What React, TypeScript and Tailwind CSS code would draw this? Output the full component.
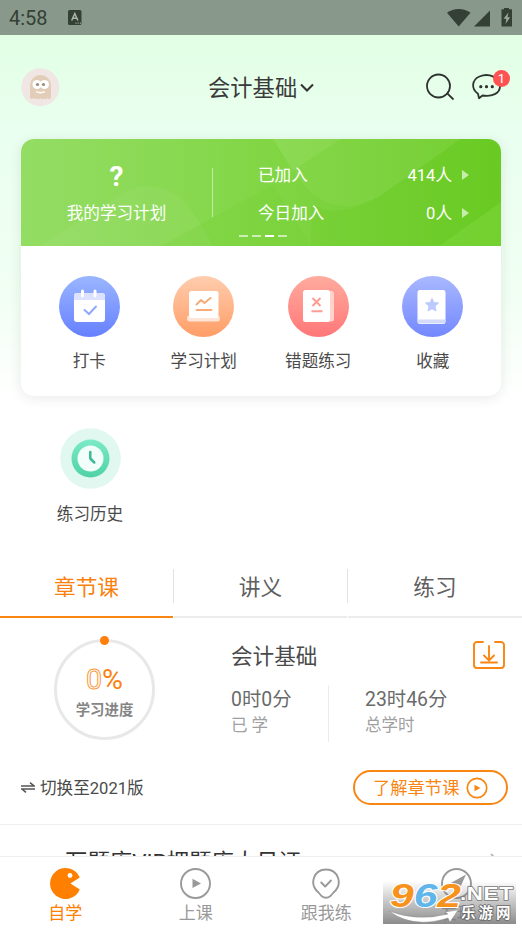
const StatusBar = () => {
  return (
    <div className="h-[35px] shrink-0 bg-[#88988a] flex items-center text-[#344036]">
      <span className="ml-[9px] w-[40px] text-[20px] leading-[35px] pt-[2px]">4:58</span>
      <svg className="ml-[19px]" width="14" height="16" viewBox="0 0 14 16">
        <rect width="13.5" height="15" rx="1.5" fill="#344036" />
        <path d="M3.7 10.5 6.8 3.5 9.9 10.5M4.9 8.3h3.8" fill="none" stroke="#a7b6a8" strokeWidth="1.5" />
        <path d="M7.5 13.2h1M9.7 13.2h1M11.9 13.2h1" stroke="#a7b6a8" strokeWidth="1.2" />
      </svg>
      <svg className="ml-auto mr-[9px]" width="67" height="20" viewBox="446 7.5 67 20">
        <path d="M447 12.3C453 7.2 464.500 7.200 470.500 12.300L458.700 26Z" fill="#344036" />
        <path d="M474 26 490 10V26Z" fill="#344036" />
        <path d="M501.500 8.800h2.500V7.500h5v1.300h3V26h-10.500Z" fill="#344036" />
        <path d="M508.500 12 503.500 18.300h2.900L505.500 23.500l4.600-6.700h-2.700Z" fill="#9dac9e" />
      </svg>
    </div>
  )
}

const Header = () => {
  return (
    <div className="h-[104px] shrink-0 grid grid-cols-[187px_1fr_97px] items-center pl-[21px]">
      <svg width="39" height="39" viewBox="0 0 39 39">
        <circle cx="19.300" cy="19.300" r="19" fill="#f0e6e3" />
        <path d="M9 30V17a10.500 10 0 0 1 21 0V30q-1.700 2-3.300 0-2 2.200-3.600.5-2 1.500-3.600 0-2 1.500-3.600 0-2 1.500-3.600-.5Q10.500 32 9 30Z" fill="#e2cdb9" />
        <circle cx="16" cy="16.500" r="4.500" fill="#fff" />
        <circle cx="23.500" cy="16.500" r="4.500" fill="#fff" />
        <circle cx="16.500" cy="16.500" r="1.600" fill="#998c80" />
        <circle cx="22.500" cy="16.500" r="1.600" fill="#998c80" />
        <path d="M15 23.700q4.500 3 9 0-4.500 1.200-9 0Z" fill="#fff" stroke="#fff" strokeWidth=".7" />
      </svg>
      <div className="flex items-center text-[22.300px] leading-none text-[#3a3a3a] pt-[2px]">
        <span className="pt-px">会计基础</span>
        <svg className="ml-[3px]" width="14" height="10" viewBox="0 0 14 10" fill="none" stroke="#333" strokeWidth="2.100">
          <path d="M1 1.500 7 7.500 13 1.500" />
        </svg>
      </div>
      <div className="flex items-center">
        <svg width="30" height="30" viewBox="425 72 30 30" fill="none" stroke="#2e332f" strokeWidth="1.800" strokeLinecap="round">
          <circle cx="438.500" cy="86" r="11.500" />
          <path d="m447.500 93.700 5.500 5.300" />
        </svg>
        <div className="relative ml-[15px]">
          <svg width="32" height="30" viewBox="470 72 32 30" fill="none">
            <path d="M478 93.800C471 89 471.500 80 479.500 76.500 489 72.500 500 77.500 500 86.200 500 93.500 492 97 482.500 95.500L479 98.300Z" stroke="#2e332f" strokeWidth="1.800" strokeLinejoin="round" />
            <circle cx="480.800" cy="86.700" r="1.600" fill="#2e332f" />
            <circle cx="486.500" cy="86.700" r="1.600" fill="#2e332f" />
            <circle cx="492.300" cy="86.700" r="1.600" fill="#2e332f" />
          </svg>
          <span className="absolute -top-[2px] left-[23px] size-[17px] rounded-full bg-[#ff5353] text-center text-[13px] leading-[18px] text-white">1</span>
        </div>
      </div>
    </div>
  )
}

const PlanRow = ({ label, count }: { label: string; count: string }) => {
  return (
    <div className="h-[38px] flex items-center">
      <span className="pt-[3px]">{label}</span>
      <span className="ml-auto pt-[3px]">{count}</span>
      <svg className="ml-[10px]" width="7" height="10" viewBox="0 0 7 10">
        <path d="M0 0 7 5 0 10Z" fill="#c6edaa" />
      </svg>
    </div>
  )
}

const PlanBanner = () => {
  return (
    <div className="relative h-[107px] bg-linear-to-r from-[#94dd64] via-[#82d645] to-[#6bcb25] text-white text-[16.600px] leading-none">
      <svg className="absolute inset-0" width="480" height="107" viewBox="0 0 480 107">
        <path d="M20 107 100 55Q130 38 158 58 174 72 192 107Z" fill="#fff" opacity=".05" />
        <path d="M140 107 252 46 290 107Z" fill="#6acb25" opacity=".18" />
        <path d="M440 0 362 55Q320 82 290 65V107H480V0Z" fill="#62c71b" opacity=".2" />
        <path d="M252 0 282 45Q315 84 362 55L440 0Z" fill="#a1e26b" opacity=".16" />
        <path d="M252 0h68L271 32Z" fill="#b7eb91" opacity=".15" />
        <path d="M418 107 480 63V107Z" fill="#8be14b" opacity=".3" />
      </svg>
      <div className="relative flex h-full">
        <div className="w-[191px] flex flex-col items-center">
          <span className="mt-[25px] text-[28px] leading-[26px] font-bold">?</span>
          <span className="mt-[16px]">我的学习计划</span>
        </div>
        <div className="mt-[29px] h-[49px] w-px bg-white/50" />
        <div className="ml-[45px] mr-[32px] mt-[17px] flex-1">
          <PlanRow label="已加入" count="414人" />
          <PlanRow label="今日加入" count="0人" />
        </div>
      </div>
      <div className="absolute left-[218px] bottom-[9px] flex gap-[4px]">
        <i className="h-[2px] w-[9px] bg-white/60" />
        <i className="h-[2px] w-[9px] bg-white/60" />
        <i className="h-[2px] w-[9px] bg-white" />
        <i className="h-[2px] w-[9px] bg-white/60" />
      </div>
    </div>
  )
}

const CheckInIcon = () => {
  return (
    <svg width="61" height="61" viewBox="0 0 61 61">
      <defs>
        <linearGradient id="blue" x2="0" y2="1">
          <stop stopColor="#9ab6ff" />
          <stop offset="1" stopColor="#6680ff" />
        </linearGradient>
      </defs>
      <circle cx="30.500" cy="30.500" r="30.500" fill="url(#blue)" />
      <rect x="15" y="17" width="31" height="29" rx="3" fill="#fff" />
      <path d="M15 24v-4a3 3 0 0 1 3-3h25a3 3 0 0 1 3 3v4Z" fill="#dbe1ff" />
      <path d="M23.500 15v5M36 15v5" stroke="#fff" strokeWidth="3" strokeLinecap="round" />
      <path d="m25.500 34 4.500 4 7-7.500" fill="none" stroke="#91a9fc" strokeWidth="2" strokeLinecap="round" />
    </svg>
  )
}

const StudyPlanIcon = () => {
  return (
    <svg width="61" height="61" viewBox="0 0 61 61">
      <defs>
        <linearGradient id="orange" x2="0" y2="1">
          <stop stopColor="#ffcdae" />
          <stop offset="1" stopColor="#ff9d66" />
        </linearGradient>
      </defs>
      <circle cx="30.500" cy="30.500" r="30.500" fill="url(#orange)" />
      <rect x="14" y="39.500" width="33" height="6" rx="3" fill="#ffe5d8" />
      <rect x="16" y="15" width="29.500" height="27" rx="2.500" fill="#fff" />
      <path d="m23.500 28.500 4.500-4.500 3.500 3 6-5" fill="none" stroke="#f8ad79" strokeWidth="2" strokeLinecap="round" strokeLinejoin="round" />
      <path d="M23.500 34h15" stroke="#f8ad79" strokeWidth="2" strokeLinecap="round" />
    </svg>
  )
}

const WrongIcon = () => {
  return (
    <svg width="61" height="61" viewBox="0 0 61 61">
      <defs>
        <linearGradient id="red" x2="0" y2="1">
          <stop stopColor="#ffab9e" />
          <stop offset="1" stopColor="#ff7778" />
        </linearGradient>
      </defs>
      <circle cx="30.500" cy="30.500" r="30.500" fill="url(#red)" />
      <rect x="18" y="15" width="28" height="30.500" rx="2.500" fill="#ffd2cc" />
      <rect x="15" y="14" width="27" height="32" rx="2.500" fill="#fff" />
      <path d="m24.500 22 8 8m0-8-8 8" stroke="#ff9c92" strokeWidth="2" />
      <path d="M23.500 35.200h11" stroke="#ff9c92" strokeWidth="2" />
    </svg>
  )
}

const FavoriteIcon = () => {
  return (
    <svg width="61" height="61" viewBox="0 0 61 61">
      <defs>
        <linearGradient id="violet" x2="0" y2="1">
          <stop stopColor="#a9b8ff" />
          <stop offset="1" stopColor="#7388ff" />
        </linearGradient>
      </defs>
      <circle cx="30.500" cy="30.500" r="30.500" fill="url(#violet)" />
      <rect x="15.500" y="14" width="28" height="34" rx="2.500" fill="#fff" />
      <path d="M15.500 43.500h28v2a2 2 0 0 1-2 2h-24a2 2 0 0 1-2-2Z" fill="#d3dafa" />
      <path d="m30 22.500 1.800 4 4.700.5-3.500 3.200 1 4.800-4-2.300-4 2.300 1-4.800-3.500-3.200 4.700-.5Z" fill="#bdcaff" stroke="#bdcaff" />
    </svg>
  )
}

const HistoryIcon = () => {
  return (
    <svg width="61" height="61" viewBox="0 0 61 61">
      <defs>
        <linearGradient id="mint" x2="0" y2="1">
          <stop stopColor="#7ceac7" />
          <stop offset="1" stopColor="#4fd2a5" />
        </linearGradient>
      </defs>
      <circle cx="30.500" cy="30.500" r="30.300" fill="#e0f8ef" />
      <circle cx="30.500" cy="30.500" r="19" fill="url(#mint)" />
      <circle cx="30.500" cy="30.500" r="13" fill="#f1fefa" />
      <path d="M30.300 24v6.500l4 4" fill="none" stroke="#3fb995" strokeWidth="2.500" strokeLinecap="round" strokeLinejoin="round" />
    </svg>
  )
}

const shortcuts = [
  { label: "打卡", Icon: CheckInIcon },
  { label: "学习计划", Icon: StudyPlanIcon },
  { label: "错题练习", Icon: WrongIcon },
  { label: "收藏", Icon: FavoriteIcon },
]

const MainCard = () => {
  return (
    <div className="mx-[21px] h-[257px] shrink-0 rounded-[13px] bg-white overflow-hidden shadow-[0_2px_14px_rgba(0,0,0,0.09)]">
      <PlanBanner />
      <div className="grid grid-cols-4 pl-[11px] pr-[11px] pt-[30px]">
        {shortcuts.map(({ label, Icon }) => (
          <div key={label} className="flex flex-col items-center">
            <Icon />
            <span className="mt-[16px] text-[16.600px] leading-[18px] text-[#4a4a4a]">{label}</span>
          </div>
        ))}
      </div>
    </div>
  )
}

const Tabs = () => {
  return (
    <div className="h-[64px] shrink-0 flex text-[21.700px] text-[#606060] leading-[67px] text-center">
      <div className="w-[173px] border-b-2 border-[#f98613] text-[#fa810e]">章节课</div>
      <div className="w-px h-[34px] mt-[15px] bg-[#e2e2e2]" />
      <div className="w-[173px] border-b-2 border-[#ececec]">讲义</div>
      <div className="w-px h-[34px] mt-[15px] bg-[#e2e2e2]" />
      <div className="flex-1 border-b-2 border-[#ececec]">练习</div>
    </div>
  )
}

const Progress = () => {
  return (
    <div className="relative mt-[21px] ml-[54px] size-[101px] rounded-full border-[3px] border-[#e8e8e8] flex flex-col items-center">
      <i className="absolute -top-[6px] left-[43px] size-[9px] rounded-full bg-[#ff7f0a]" />
      <div className="mt-[24px] text-[28.500px] leading-[28px] text-[#fa810e] flex">
        <span className="text-white [-webkit-text-stroke:1px_#f6993e]">0</span>
        <span>%</span>
      </div>
      <span className="mt-[10px] text-[14.400px] leading-none font-bold text-[#858585]">学习进度</span>
    </div>
  )
}

const Course = () => {
  return (
    <div className="h-[207px] shrink-0 border-b border-[#f0f0f0]">
      <div className="flex h-[130px]">
        <div className="w-[231px]"><Progress /></div>
        <div className="flex-1">
          <div className="flex h-[67px] pt-[22px] pr-[17px]">
            <span className="text-[21.600px] leading-[34px] text-[#4a4a4a]">会计基础</span>
            <svg className="ml-auto" width="32" height="30" viewBox="0 0 32 30" fill="none" stroke="#f98613" strokeWidth="1.900" strokeLinecap="round">
              <path d="M10 2H4a3 3 0 0 0-3 3v20a3 3 0 0 0 3 3h24a3 3 0 0 0 3-3V5a3 3 0 0 0-3-3h-6M16 6v14M11 15.500l5 5 5-5M8 22.500h16" />
            </svg>
          </div>
          <div className="flex text-[19.400px] leading-[30px] text-[#6a6a6a]">
            <div className="w-[98px] h-[57px] border-r border-[#ececec]">
              <p>0时0分</p>
              <p className="text-[16.500px] leading-[21px] text-[#a0a0a0]">已 学</p>
            </div>
            <div className="ml-[36px]">
              <p>23时46分</p>
              <p className="text-[16.500px] leading-[21px] text-[#a0a0a0]">总学时</p>
            </div>
          </div>
        </div>
      </div>
      <div className="mt-[22px] ml-[21px] mr-[14px] flex items-center">
        <svg width="14" height="11" viewBox="0 0 14 11" fill="none" stroke="#555" strokeWidth="1.500">
          <path d="M0 4h13L9 .7M14 7H1l4 3.300" />
        </svg>
        <span className="ml-[5px] pt-[4px] text-[16.600px] leading-none text-[#4a4a4a]">切换至2021版</span>
        <button className="ml-auto flex h-[35px] w-[155px] items-center rounded-full border-2 border-[#f98613] pl-[18px] text-[17.300px] leading-none text-[#f98613]">
          <span className="pt-[3px]">了解章节课</span>
          <svg className="ml-[7px]" width="22" height="22" viewBox="0 0 22 22">
            <circle cx="11" cy="11" r="9.700" fill="none" stroke="#f98613" strokeWidth="1.700" />
            <path d="M8.500 7.800 14.500 11 8.500 14.200Z" fill="#f98613" />
          </svg>
        </button>
      </div>
    </div>
  )
}

const Watermark = () => {
  return (
    <div className="absolute left-[383px] top-[24px] h-[43px] w-[133px] bg-linear-to-b from-[#777]/0 to-[#777]/85 text-white leading-none">
      <svg className="absolute left-[6px] top-[28px]" width="70" height="16" viewBox="0 0 70 16">
        <path d="M0 2Q28 13 59 5L56 3 69 1 61 13 59 9Q24 20 0 2Z" fill="#fff" stroke="#888" strokeWidth=".4" />
      </svg>
      <div className="absolute left-[7px] -top-[3px] flex origin-left scale-x-[1.250] font-['Liberation_Sans'] text-[34px] leading-[34px] font-bold italic [paint-order:stroke_fill] [-webkit-text-stroke:2px_#fff]">
        <span className="text-[#f7931d]">9</span>
        <span className="text-[#60b5eb]">6</span>
        <span className="text-[#f7931d]">2</span>
      </div>
      <span className="absolute left-[77px] top-[3px] origin-left scale-x-[1.180] font-['Liberation_Sans'] text-[19px] leading-[20px] font-bold tracking-[0.500px] [paint-order:stroke_fill] [-webkit-text-stroke:1.500px_#777]">.NET</span>
      <span className="absolute left-[78px] top-[26px] whitespace-nowrap text-[14.500px] font-bold tracking-[3px] [paint-order:stroke_fill] [-webkit-text-stroke:1.500px_#666]">乐游网</span>
    </div>
  )
}

const BottomNav = () => {
  return (
    <div className="relative h-[73px] shrink-0 border-t border-[#eeeeee] bg-white grid grid-cols-4 pt-[9px] text-[17px] leading-[27px] text-[#999]">
      <div className="flex flex-col items-center text-[#ff8000]">
        <svg width="32" height="34" viewBox="0 0 32 34">
          <path d="M21.500 17.500 30.800 11.500A15.500 15.500 0 1 0 30.800 23.500Z" fill="#ff8000" />
          <circle cx="21" cy="9.500" r="2.400" fill="#fff" />
        </svg>
        自学
      </div>
      <div className="flex flex-col items-center">
        <svg width="32" height="34" viewBox="0 0 32 34">
          <circle cx="15.500" cy="17.500" r="14.500" fill="none" stroke="#999" strokeWidth="1.900" />
          <path d="M12.500 12.800 21 17.500 12.500 22.100Z" fill="#999" />
        </svg>
        上课
      </div>
      <div className="flex flex-col items-center">
        <svg width="32" height="34" viewBox="0 0 32 34" fill="none" stroke="#999" strokeWidth="1.900" strokeLinecap="round" strokeLinejoin="round">
          <path d="M8.500 26.500C-1.500 18 4 3.500 16 3.500S33.500 18 23.500 26.500L20.500 30Q16 33.500 11.500 30Z" />
          <path d="m11.200 16.500 4 4 5.800-6" />
        </svg>
        跟我练
      </div>
      <div className="flex flex-col items-center">
        <svg width="32" height="34" viewBox="0 0 32 34">
          <circle cx="15.500" cy="17.500" r="14.500" fill="none" stroke="#999" strokeWidth="1.900" />
          <path d="M25 8.500 18 24 15 19 8 18Z" fill="#999" />
        </svg>
        发现
      </div>
      <Watermark />
    </div>
  )
}

const App = () => {
  return (
    <div className="h-[929px] w-[522px] flex flex-col overflow-hidden bg-white bg-[linear-gradient(#e2ffe4_35px,#e9ffef_130px,#f2fff4_300px,#fff_400px)] font-[Roboto,'Noto_Sans_CJK_SC',sans-serif]">
      <StatusBar />
      <Header />
      <MainCard />
      <div className="mt-[32px] ml-[32px] h-[126px] w-[116px] shrink-0 flex flex-col items-center">
        <HistoryIcon />
        <span className="mt-[16px] text-[16.600px] leading-[20px] text-[#4a4a4a]">练习历史</span>
      </div>
      <Tabs />
      <Course />
      <div className="flex-1 min-h-0 overflow-hidden pl-[65px] pr-[24px] pt-[21px] flex items-start text-[22.400px] leading-[33px] text-[#333]">
        <span>万题库VIP押题库大见证</span>
        <svg className="ml-auto mt-[7px]" width="8" height="14" viewBox="0 0 8 14" fill="none" stroke="#aaa" strokeWidth="1.500">
          <path d="m1 1 6 6-6 6" />
        </svg>
      </div>
      <BottomNav />
    </div>
  )
}

export default App
